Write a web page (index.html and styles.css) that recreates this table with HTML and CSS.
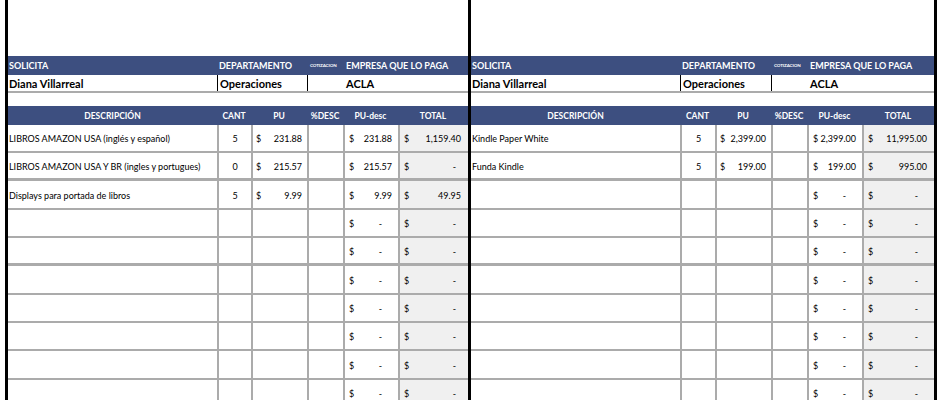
FILE: index.html
```html
<!DOCTYPE html>
<html lang="es">
<head>
<meta charset="utf-8">
<title>Cotización</title>
<link rel="stylesheet" href="styles.css">
</head>
<body>
<div class="page">
  <div class="vbar"></div>

  <section class="sheet sheet-left">
    <div class="blank-top"></div>
    <div class="grid band">
      <span class="bcell">SOLICITA</span>
      <span class="bcell span2">DEPARTAMENTO</span>
      <span class="bcell cot">COTIZACION</span>
      <span class="bcell span2">EMPRESA QUE LO PAGA</span>
    </div>
    <div class="grid info">
      <span class="icell">Diana Villarreal</span>
      <span class="icell span2 sep">Operaciones</span>
      <span class="icell sep"></span>
      <span class="icell span2">ACLA</span>
    </div>
    <div class="gap"></div>
    <div class="grid thead">
      <span>DESCRIPCIÓN</span><span>CANT</span><span>PU</span><span>%DESC</span><span>PU-desc</span><span>TOTAL</span>
    </div>
    <div class="rows">
      <div class="grid row"><span class="c desc">LIBROS AMAZON USA (inglés y español)</span><span class="c cant">5</span><span class="c num pu"><span>$</span><span>231.88</span></span><span class="c"></span><span class="c num pud"><span>$</span><span>231.88</span></span><span class="c num tot"><span>$</span><span>1,159.40</span></span></div>
      <div class="grid row thick"><span class="c desc">LIBROS AMAZON USA Y BR (ingles y portugues)</span><span class="c cant">0</span><span class="c num pu"><span>$</span><span>215.57</span></span><span class="c"></span><span class="c num pud"><span>$</span><span>215.57</span></span><span class="c num tot"><span>$</span><span class="dash">-</span></span></div>
      <div class="grid row"><span class="c desc">Displays para portada de libros</span><span class="c cant">5</span><span class="c num pu"><span>$</span><span>9.99</span></span><span class="c"></span><span class="c num pud"><span>$</span><span>9.99</span></span><span class="c num tot"><span>$</span><span>49.95</span></span></div>
      <div class="grid row"><span class="c desc"></span><span class="c"></span><span class="c"></span><span class="c"></span><span class="c num pud"><span>$</span><span class="dash">-</span></span><span class="c num tot"><span>$</span><span class="dash">-</span></span></div>
      <div class="grid row thick"><span class="c desc"></span><span class="c"></span><span class="c"></span><span class="c"></span><span class="c num pud"><span>$</span><span class="dash">-</span></span><span class="c num tot"><span>$</span><span class="dash">-</span></span></div>
      <div class="grid row"><span class="c desc"></span><span class="c"></span><span class="c"></span><span class="c"></span><span class="c num pud"><span>$</span><span class="dash">-</span></span><span class="c num tot"><span>$</span><span class="dash">-</span></span></div>
      <div class="grid row"><span class="c desc"></span><span class="c"></span><span class="c"></span><span class="c"></span><span class="c num pud"><span>$</span><span class="dash">-</span></span><span class="c num tot"><span>$</span><span class="dash">-</span></span></div>
      <div class="grid row"><span class="c desc"></span><span class="c"></span><span class="c"></span><span class="c"></span><span class="c num pud"><span>$</span><span class="dash">-</span></span><span class="c num tot"><span>$</span><span class="dash">-</span></span></div>
      <div class="grid row"><span class="c desc"></span><span class="c"></span><span class="c"></span><span class="c"></span><span class="c num pud"><span>$</span><span class="dash">-</span></span><span class="c num tot"><span>$</span><span class="dash">-</span></span></div>
      <div class="grid row"><span class="c desc"></span><span class="c"></span><span class="c"></span><span class="c"></span><span class="c num pud"><span>$</span><span class="dash">-</span></span><span class="c num tot"><span>$</span><span class="dash">-</span></span></div>
    </div>
  </section>

  <div class="vbar"></div>

  <section class="sheet sheet-right">
    <div class="blank-top"></div>
    <div class="grid band">
      <span class="bcell">SOLICITA</span>
      <span class="bcell span2">DEPARTAMENTO</span>
      <span class="bcell cot">COTIZACION</span>
      <span class="bcell span2">EMPRESA QUE LO PAGA</span>
    </div>
    <div class="grid info">
      <span class="icell">Diana Villarreal</span>
      <span class="icell span2 sep">Operaciones</span>
      <span class="icell sep"></span>
      <span class="icell span2">ACLA</span>
    </div>
    <div class="gap"></div>
    <div class="grid thead">
      <span>DESCRIPCIÓN</span><span>CANT</span><span>PU</span><span>%DESC</span><span>PU-desc</span><span>TOTAL</span>
    </div>
    <div class="rows">
      <div class="grid row"><span class="c desc">Kindle Paper White</span><span class="c cant">5</span><span class="c num pu"><span>$</span><span>2,399.00</span></span><span class="c"></span><span class="c num pud"><span>$</span><span>2,399.00</span></span><span class="c num tot"><span>$</span><span>11,995.00</span></span></div>
      <div class="grid row thick"><span class="c desc">Funda Kindle</span><span class="c cant">5</span><span class="c num pu"><span>$</span><span>199.00</span></span><span class="c"></span><span class="c num pud"><span>$</span><span>199.00</span></span><span class="c num tot"><span>$</span><span>995.00</span></span></div>
      <div class="grid row"><span class="c desc"></span><span class="c"></span><span class="c"></span><span class="c"></span><span class="c num pud"><span>$</span><span class="dash">-</span></span><span class="c num tot"><span>$</span><span class="dash">-</span></span></div>
      <div class="grid row"><span class="c desc"></span><span class="c"></span><span class="c"></span><span class="c"></span><span class="c num pud"><span>$</span><span class="dash">-</span></span><span class="c num tot"><span>$</span><span class="dash">-</span></span></div>
      <div class="grid row thick"><span class="c desc"></span><span class="c"></span><span class="c"></span><span class="c"></span><span class="c num pud"><span>$</span><span class="dash">-</span></span><span class="c num tot"><span>$</span><span class="dash">-</span></span></div>
      <div class="grid row"><span class="c desc"></span><span class="c"></span><span class="c"></span><span class="c"></span><span class="c num pud"><span>$</span><span class="dash">-</span></span><span class="c num tot"><span>$</span><span class="dash">-</span></span></div>
      <div class="grid row"><span class="c desc"></span><span class="c"></span><span class="c"></span><span class="c"></span><span class="c num pud"><span>$</span><span class="dash">-</span></span><span class="c num tot"><span>$</span><span class="dash">-</span></span></div>
      <div class="grid row"><span class="c desc"></span><span class="c"></span><span class="c"></span><span class="c"></span><span class="c num pud"><span>$</span><span class="dash">-</span></span><span class="c num tot"><span>$</span><span class="dash">-</span></span></div>
      <div class="grid row"><span class="c desc"></span><span class="c"></span><span class="c"></span><span class="c"></span><span class="c num pud"><span>$</span><span class="dash">-</span></span><span class="c num tot"><span>$</span><span class="dash">-</span></span></div>
      <div class="grid row"><span class="c desc"></span><span class="c"></span><span class="c"></span><span class="c"></span><span class="c num pud"><span>$</span><span class="dash">-</span></span><span class="c num tot"><span>$</span><span class="dash">-</span></span></div>
    </div>
  </section>

  <div class="vbar"></div>
</div>
</body>
</html>
```

FILE: styles.css
```css
* { box-sizing: border-box; margin: 0; padding: 0; }

body {
  margin: 0;
  width: 940px;
  height: 400px;
  overflow: hidden;
  background: #fff;
  color: #000;
  font-family: Lato, "Liberation Sans", sans-serif;
}

.page {
  display: flex;
  padding-left: 5px;
  height: 400px;
}

.vbar {
  flex: none;
  width: 3px;
  background: #000;
}

.sheet { flex: none; }

.sheet-left {
  width: 460px;
  --cols: 209px 34px 56px 36px 55px 70px;
  --totdash: 5px;
}

.sheet-right {
  width: 463px;
  --cols: 209px 35px 56px 36px 55px 72px;
  --totdash: 9px;
}

.grid {
  display: grid;
  grid-template-columns: var(--cols);
}

.span2 { grid-column: span 2; }

.blank-top { height: 56px; }

.band {
  height: 19px;
  background: #3d4f80;
  color: #fff;
  font-weight: 700;
  font-size: 9px;
  align-items: center;
}

.bcell { padding-left: 2px; white-space: nowrap; }
.band .bcell:first-child { padding-left: 1px; }
.band .cot { font-size: 4.5px; padding-left: 3px; letter-spacing: -0.1px; }
.band .bcell:last-child { padding-left: 3px; }

.info {
  height: 18px;
  border-bottom: 2px solid #ababab;
  font-weight: 700;
  font-size: 11px;
}

.icell {
  display: flex;
  align-items: center;
  padding-left: 1px;
  white-space: nowrap;
}
.icell.sep { border-left: 1px solid #000; padding-left: 2px; }
.info .icell:last-child { padding-left: 3px; }

.gap { height: 13px; }

.thead {
  height: 19px;
  background: #3d4f80;
  color: #fff;
  font-weight: 700;
  font-size: 8.5px;
  align-items: center;
  text-align: center;
}

.row {
  height: 28px;
  border-bottom: 2px solid #ababab;
  font-size: 9px;
}
.row:nth-child(3n) { height: 29px; }
.row.thick { border-bottom-width: 3px; }

.c {
  display: flex;
  align-items: center;
  padding-top: 1px;
  border-left: 2px solid #ababab;
  white-space: nowrap;
  color: #000;
}
.c.desc { border-left: none; padding-left: 1px; }
.c.cant { justify-content: center; }
.c.num { justify-content: space-between; }
.c.pu { padding-left: 3px; padding-right: 5px; }
.c.pud { padding-left: 4px; padding-right: 6px; }
.c.tot { padding-left: 4px; padding-right: 7px; background: #f0f0f0; }
.pud .dash { margin-right: 10px; }
.tot .dash { margin-right: var(--totdash); }
```
